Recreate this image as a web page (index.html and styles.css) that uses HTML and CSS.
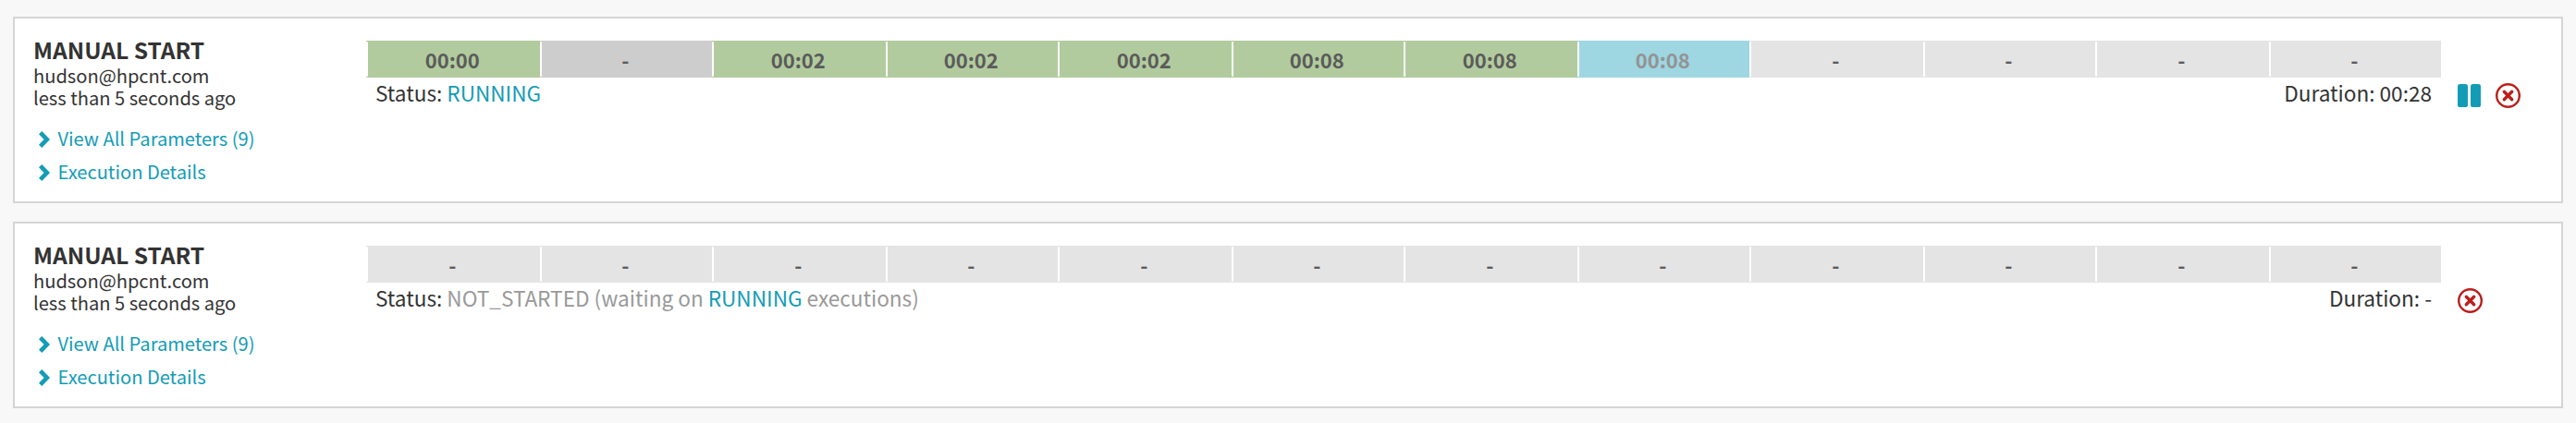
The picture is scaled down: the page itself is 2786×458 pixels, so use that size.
FILE: index.html
```html
<!DOCTYPE html>
<html lang="en">
<head>
<meta charset="utf-8">
<title>Pipeline executions</title>
<link rel="stylesheet" href="styles.css">
</head>
<body>
<svg class="defs" width="0" height="0">
  <symbol id="chevron" viewBox="0 0 12 18"><path d="M3.3 0 12 9 3.3 18 0 14.8 5.6 9 0 3.2Z" fill="currentColor"/></symbol>
  <symbol id="pause" viewBox="0 0 25 25"><rect width="11" height="25" rx="2.6" fill="currentColor"/><rect x="14" width="11" height="25" rx="2.6" fill="currentColor"/></symbol>
  <symbol id="cancel" viewBox="0 0 27 27"><circle cx="13.5" cy="13.5" r="12.3" fill="none" stroke="currentColor" stroke-width="2.4"/><path d="M9.3 9.3 17.7 17.7M17.7 9.3 9.3 17.7" stroke="currentColor" stroke-width="3.4" stroke-linecap="round"/></symbol>
</svg>
<main class="executions">
  <section class="execution">
    <div class="summary">
      <h2 class="title">MANUAL START</h2>
      <div class="meta">hudson@hpcnt.com</div>
      <div class="meta">less than 5 seconds ago</div>
      <nav class="links">
        <a class="link"><svg class="chevron"><use href="#chevron"/></svg>View All Parameters (9)</a>
        <a class="link"><svg class="chevron"><use href="#chevron"/></svg>Execution Details</a>
      </nav>
    </div>
    <div class="progress">
      <div class="stages">
        <div class="stage succeeded">00:00</div>
        <div class="stage skipped">-</div>
        <div class="stage succeeded">00:02</div>
        <div class="stage succeeded">00:02</div>
        <div class="stage succeeded">00:02</div>
        <div class="stage succeeded">00:08</div>
        <div class="stage succeeded">00:08</div>
        <div class="stage running">00:08</div>
        <div class="stage">-</div>
        <div class="stage">-</div>
        <div class="stage">-</div>
        <div class="stage">-</div>
      </div>
      <div class="status-row">
        <div>Status: <span class="active">RUNNING</span></div>
        <div>Duration: 00:28</div>
      </div>
    </div>
    <div class="actions">
      <svg class="pause"><use href="#pause"/></svg>
      <svg class="cancel"><use href="#cancel"/></svg>
    </div>
  </section>
  <section class="execution">
    <div class="summary">
      <h2 class="title">MANUAL START</h2>
      <div class="meta">hudson@hpcnt.com</div>
      <div class="meta">less than 5 seconds ago</div>
      <nav class="links">
        <a class="link"><svg class="chevron"><use href="#chevron"/></svg>View All Parameters (9)</a>
        <a class="link"><svg class="chevron"><use href="#chevron"/></svg>Execution Details</a>
      </nav>
    </div>
    <div class="progress">
      <div class="stages">
        <div class="stage">-</div>
        <div class="stage">-</div>
        <div class="stage">-</div>
        <div class="stage">-</div>
        <div class="stage">-</div>
        <div class="stage">-</div>
        <div class="stage">-</div>
        <div class="stage">-</div>
        <div class="stage">-</div>
        <div class="stage">-</div>
        <div class="stage">-</div>
        <div class="stage">-</div>
      </div>
      <div class="status-row">
        <div>Status: <span class="waiting">NOT_STARTED (waiting on <span class="active">RUNNING</span> executions)</span></div>
        <div>Duration: -</div>
      </div>
    </div>
    <div class="actions">
      <svg class="cancel"><use href="#cancel"/></svg>
    </div>
  </section>
</main>
</body>
</html>
```

FILE: styles.css
```css
* { box-sizing: border-box; }

body {
  margin: 0;
  background: #f8f8f8;
  color: #333;
  font-family: "Noto Sans CJK JP", "Noto Sans", sans-serif;
}

.defs { display: block; }

.executions {
  display: flex;
  flex-direction: column;
  gap: 20px;
  padding: 18px 14px 16px;
}

.execution {
  display: flex;
  align-items: flex-start;
  height: 202px;
  padding-left: 20px;
  background: #fff;
  border: 2px solid #d5d5d5;
}

.summary {
  width: 360px;
  padding-top: 18px;
}

.title {
  margin: 0 0 2px;
  font-size: 24.6px;
  font-weight: 700;
  line-height: 30px;
}

.meta {
  font-size: 20.1px;
  line-height: 24px;
}

.links { padding-top: 14px; }

.link {
  display: flex;
  align-items: center;
  gap: 9px;
  padding-left: 5.5px;
  color: #139cb6;
  font-size: 20.1px;
  line-height: 36px;
}

.chevron {
  width: 12px;
  height: 18px;
  margin-top: 2px;
}

.progress {
  width: 2244px;
  padding-top: 24px;
}

.stages {
  display: grid;
  grid-template-columns: repeat(6, 188px 186px);
}

.stage {
  display: flex;
  justify-content: center;
  height: 40px;
  padding-right: 3.5px;
  background: #e4e4e4;
  color: #5b5b5b;
  font-size: 22px;
  font-weight: 700;
  line-height: 40px;
}

/* White divider with rounded ends at the leading edge of each stage */
.stage::before {
  content: "";
  width: 2px;
  height: 38px;
  margin: 1px auto 1px 0;
  border-radius: 1px;
  background: #fff;
}

.stage::after {
  content: "";
  margin-left: auto;
}

.succeeded { background: #b2cb9e; }
.skipped { background: #cdcdcd; }
.running { background: #9ed6e1; color: #939393; }

.status-row {
  display: flex;
  justify-content: space-between;
  padding: 0 10px;
  font-size: 22.58px;
  line-height: 33px;
}

.active { color: #139cb6; }
.waiting { color: #999; }

.actions {
  display: flex;
  align-items: center;
  gap: 16px;
  padding: 70px 0 0 18px;
}

.pause { width: 25px; height: 25px; color: #139cb6; }
.cancel { width: 27px; height: 27px; color: #bb1f1c; }
```
